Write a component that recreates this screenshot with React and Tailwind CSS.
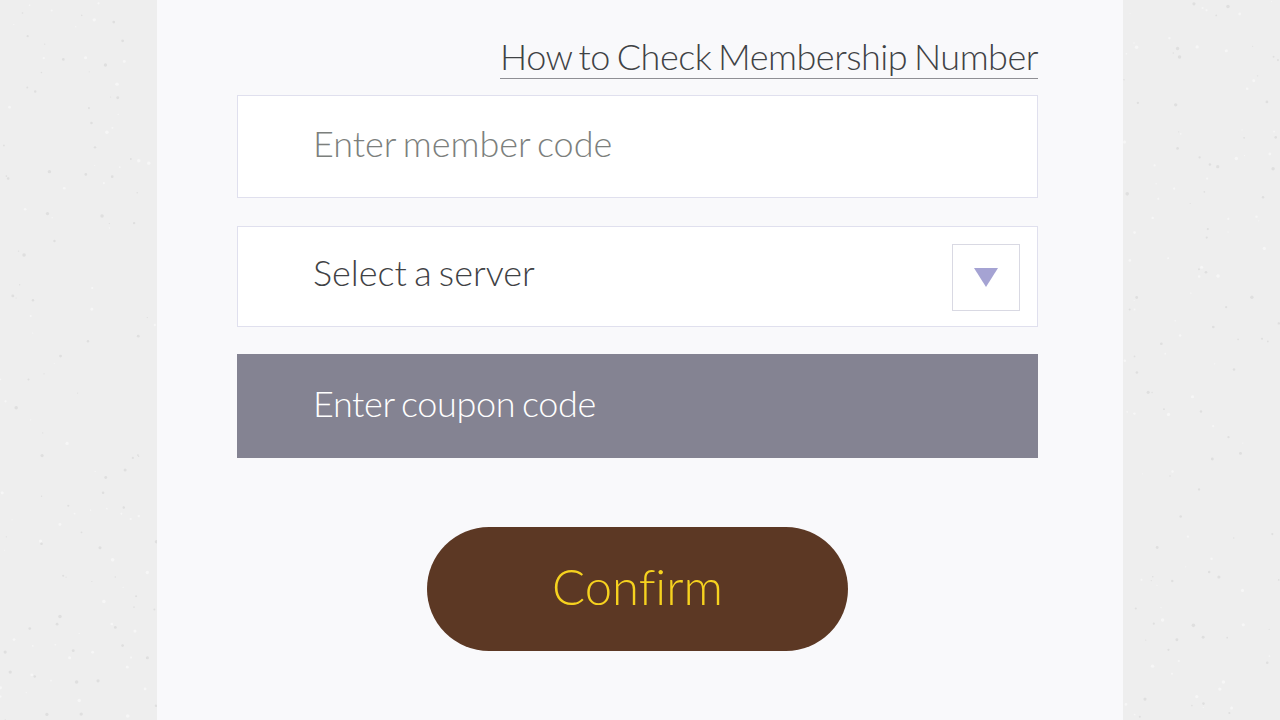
import React from "react";

// seeded so the speckles stay put between runs
function makeDots(seed, count, width, height) {
  let s = seed;
  const next = () => {
    s = (s * 16807) % 2147483647;
    return s / 2147483647;
  };
  return Array.from({ length: count }, () => ({
    x: next() * width,
    y: next() * height,
    r: 0.5 + next() * 1.3,
    light: next() > 0.5,
  }));
}

function Speckles({ seed, width }) {
  const dots = makeDots(seed, 150, width, 720);
  return (
    <svg width={width} height="720" className="block">
      {dots.map((d, i) => (
        <circle key={i} cx={d.x} cy={d.y} r={d.r} fill={d.light ? "#f6f6f6" : "#dfdfdf"} />
      ))}
    </svg>
  );
}

export default function App() {
  return (
    <div className="flex h-[720px] w-[1280px] overflow-hidden bg-[#eeeeee] font-['Lato','Noto_Sans',sans-serif] font-light [font-variant-ligatures:none]">
      <div className="w-[157px] shrink-0">
        <Speckles seed={4211} width={157} />
      </div>

      <main className="w-[966px] shrink-0 bg-[#f9f9fb] pl-[80px] pr-[85px] pt-[34px]">
        <div className="flex justify-end">
          <a className="border-b border-[#8f8f94] text-[36px] leading-[44px] tracking-[-0.49px] [word-spacing:-2.5px] text-[#3f4245]">
            How to Check Membership Number
          </a>
        </div>

        <input
          placeholder="Enter member code"
          className="mt-[16px] block h-[103px] w-full border border-[#e0e0ee] bg-white pb-[8px] pl-[75px] text-[36px] tracking-[-0.05px] [word-spacing:-2.5px] text-[#7c7f7d] outline-none placeholder:text-[#7c7f7d]"
        />

        <div className="mt-[28px] flex h-[101px] items-center justify-between border border-[#e0e0ee] bg-white pl-[75px] pr-[17px]">
          <span className="pb-[9px] text-[36px] [word-spacing:-2.5px] text-[#3f4245]">Select a server</span>
          <span className="mt-[1px] flex h-[67px] w-[68px] items-center justify-center border border-[#d9d9e3] bg-white">
            <svg width="24" height="19" viewBox="0 0 24 19" className="mt-[1px]">
              <path d="M0 0H24L12 19Z" fill="#a5a3d3" />
            </svg>
          </span>
        </div>

        <div className="mt-[27px] flex h-[104px] items-center bg-[#848392] pb-[6px] pl-[76px] text-[36px] tracking-[-0.35px] [word-spacing:-2.5px] text-white">
          Enter coupon code
        </div>

        <div className="mt-[69px] flex justify-center">
          <button className="h-[124px] w-[421px] rounded-full bg-[#5c3824] pb-[5px] text-[49px] text-[#f6d21f]">
            Confirm
          </button>
        </div>
      </main>

      <div className="w-[157px] shrink-0">
        <Speckles seed={9377} width={157} />
      </div>
    </div>
  );
}
